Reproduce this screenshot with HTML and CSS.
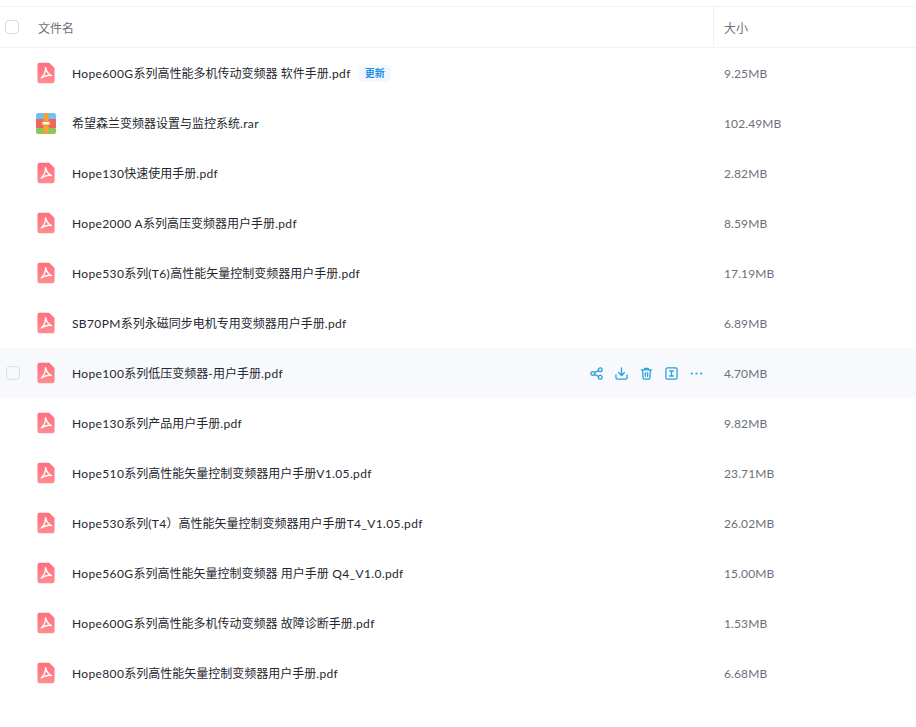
FILE: index.html
```html
<!DOCTYPE html>
<html lang="zh">
<head>
    <meta charset="UTF-8">
    <title>文件列表</title>
    <link rel="stylesheet" href="styles.css">
</head>
<body>
    <svg class="defs" width="0" height="0">
        <linearGradient id="pdf-fill" x1="0" y1="0" x2="0" y2="1">
            <stop offset="0" stop-color="#ff6f7d"/>
            <stop offset="1" stop-color="#ff8c90"/>
        </linearGradient>
        <symbol id="pdf" viewBox="0 0 20 24">
            <path d="M3 .5h10.500L19.500 6.500V21a2.500 2.500 0 0 1-2.500 2.500H3A2.500 2.500 0 0 1 .5 21V3A2.500 2.500 0 0 1 3 .5z" fill="url(#pdf-fill)"/>
            <path d="M9.500 6c.8 3.800 2.500 7 6.500 8.800-3.500-.7-7-.2-11.200 2.700M9.500 6c.3 4-1.500 8.300-4.700 11.500" fill="none" stroke="#fff" stroke-width="1.500" stroke-linecap="round" stroke-linejoin="round"/>
        </symbol>
        <symbol id="rar" viewBox="0 0 20 21">
            <rect width="20" height="7" rx="2.500" fill="#6cc3f2"/>
            <rect y="14" width="20" height="7" rx="2.500" fill="#85cb53"/>
            <rect y="6" width="20" height="9" fill="#f0645f"/>
            <rect x="7.500" width="5" height="21" fill="#f7a13c"/>
            <rect x="6" y="8.500" width="8" height="3.500" fill="#fff3dc" stroke="#e58a25" stroke-width=".8"/>
        </symbol>
    </svg>

    <div class="file-list">
        <div class="list-head">
            <div class="col-name"><span class="checkbox"></span><span class="head-label">文件名</span></div>
            <div class="col-size">大小</div>
        </div>

        <div class="row">
            <div class="col-name"><span class="check-slot"></span><svg class="icon-pdf"><use href="#pdf"/></svg><span class="fname"><span class="en">Hope600G</span>系列高性能多机传动变频器<span class="en"> </span>软件手册<span class="en">.pdf</span></span><span class="tag">更新</span></div>
            <div class="col-size">9.25MB</div>
        </div>
        <div class="row">
            <div class="col-name"><span class="check-slot"></span><svg class="icon-rar"><use href="#rar"/></svg><span class="fname">希望森兰变频器设置与监控系统<span class="en">.rar</span></span></div>
            <div class="col-size">102.49MB</div>
        </div>
        <div class="row">
            <div class="col-name"><span class="check-slot"></span><svg class="icon-pdf"><use href="#pdf"/></svg><span class="fname"><span class="en">Hope130</span>快速使用手册<span class="en">.pdf</span></span></div>
            <div class="col-size">2.82MB</div>
        </div>
        <div class="row">
            <div class="col-name"><span class="check-slot"></span><svg class="icon-pdf"><use href="#pdf"/></svg><span class="fname"><span class="en">Hope2000 A</span>系列高压变频器用户手册<span class="en">.pdf</span></span></div>
            <div class="col-size">8.59MB</div>
        </div>
        <div class="row">
            <div class="col-name"><span class="check-slot"></span><svg class="icon-pdf"><use href="#pdf"/></svg><span class="fname"><span class="en">Hope530</span>系列<span class="en">(T6)</span>高性能矢量控制变频器用户手册<span class="en">.pdf</span></span></div>
            <div class="col-size">17.19MB</div>
        </div>
        <div class="row">
            <div class="col-name"><span class="check-slot"></span><svg class="icon-pdf"><use href="#pdf"/></svg><span class="fname"><span class="en">SB70PM</span>系列永磁同步电机专用变频器用户手册<span class="en">.pdf</span></span></div>
            <div class="col-size">6.89MB</div>
        </div>

        <div class="row hovered">
            <div class="col-name">
                <span class="check-slot"><span class="checkbox"></span></span><svg class="icon-pdf"><use href="#pdf"/></svg><span class="fname"><span class="en">Hope100</span>系列低压变频器<span class="en">-</span>用户手册<span class="en">.pdf</span></span>
                <div class="actions">
                    <svg viewBox="0 0 14 14"><circle cx="3" cy="7" r="2"/><circle cx="11" cy="3" r="2"/><circle cx="11" cy="11" r="2"/><path d="M4.800 6.100l4.400-2.200M4.800 7.900l4.400 2.200"/></svg>
                    <svg viewBox="0 0 14 14"><path d="M7 1v8M3.800 6L7 9.200 10.200 6M1 8.500V11a2 2 0 0 0 2 2h8a2 2 0 0 0 2-2V8.500"/></svg>
                    <svg viewBox="0 0 14 14"><path d="M1.500 3h11M5 3V1.500h4V3M2.800 3l.5 8.500a1.500 1.500 0 0 0 1.500 1.500h4.400a1.500 1.500 0 0 0 1.500-1.500l.5-8.500M5.800 6v4M8.200 6v4"/></svg>
                    <svg viewBox="0 0 14 14"><rect x="1" y="1" width="12" height="12" rx="1.500"/><path d="M5 4.300h4M5 9.700h4M7 4.300v5.400"/></svg>
                    <svg viewBox="0 0 14 14"><circle class="dot" cx="2" cy="7" r="1.200"/><circle class="dot" cx="7" cy="7" r="1.200"/><circle class="dot" cx="12" cy="7" r="1.200"/></svg>
                </div>
            </div>
            <div class="col-size">4.70MB</div>
        </div>

        <div class="row">
            <div class="col-name"><span class="check-slot"></span><svg class="icon-pdf"><use href="#pdf"/></svg><span class="fname"><span class="en">Hope130</span>系列产品用户手册<span class="en">.pdf</span></span></div>
            <div class="col-size">9.82MB</div>
        </div>
        <div class="row">
            <div class="col-name"><span class="check-slot"></span><svg class="icon-pdf"><use href="#pdf"/></svg><span class="fname"><span class="en">Hope510</span>系列高性能矢量控制变频器用户手册<span class="en">V1.05.pdf</span></span></div>
            <div class="col-size">23.71MB</div>
        </div>
        <div class="row">
            <div class="col-name"><span class="check-slot"></span><svg class="icon-pdf"><use href="#pdf"/></svg><span class="fname"><span class="en">Hope530</span>系列<span class="en">(T4</span>）高性能矢量控制变频器用户手册<span class="en">T4_V1.05.pdf</span></span></div>
            <div class="col-size">26.02MB</div>
        </div>
        <div class="row">
            <div class="col-name"><span class="check-slot"></span><svg class="icon-pdf"><use href="#pdf"/></svg><span class="fname"><span class="en">Hope560G</span>系列高性能矢量控制变频器<span class="en"> </span>用户手册<span class="en"> Q4_V1.0.pdf</span></span></div>
            <div class="col-size">15.00MB</div>
        </div>
        <div class="row">
            <div class="col-name"><span class="check-slot"></span><svg class="icon-pdf"><use href="#pdf"/></svg><span class="fname"><span class="en">Hope600G</span>系列高性能多机传动变频器<span class="en"> </span>故障诊断手册<span class="en">.pdf</span></span></div>
            <div class="col-size">1.53MB</div>
        </div>
        <div class="row">
            <div class="col-name"><span class="check-slot"></span><svg class="icon-pdf"><use href="#pdf"/></svg><span class="fname"><span class="en">Hope800</span>系列高性能矢量控制变频器用户手册<span class="en">.pdf</span></span></div>
            <div class="col-size">6.68MB</div>
        </div>
    </div>
</body>
</html>
```

FILE: styles.css
```css
body {
    margin: 0;
    background-color: #fff;
    font-family: Lato, "Noto Sans CJK SC", sans-serif;
    font-size: 12px;
    color: #25272f;
    overflow: hidden;
}

.defs {
    position: absolute;
}

.file-list {
    padding-top: 6px;
}

.list-head {
    display: flex;
    height: 40px;
    align-items: stretch;
    border-top: 1px solid #f1f2f4;
    border-bottom: 1px solid #f1f2f4;
    color: #6b6f7a;
}

.list-head .col-name {
    border-right: 1px solid #f1f2f4;
}

.list-head .col-size {
    width: 202px;
    padding-left: 10px;
    letter-spacing: 0;
}

.col-name {
    display: flex;
    align-items: center;
    width: 713px;
    flex-shrink: 0;
}

.col-size {
    display: flex;
    align-items: center;
    padding-left: 11px;
    color: #6b6f7a;
    letter-spacing: 0.12px;
}

.checkbox {
    display: block;
    width: 12px;
    height: 12px;
    margin-left: 5px;
    border: 1px solid #dcdee3;
    border-radius: 4px;
}

.row .checkbox {
    margin-left: 6px;
}

.head-label {
    margin-left: 19px;
}

.row {
    display: flex;
    height: 50px;
}

.row.hovered {
    background-color: #f7f9fc;
}

.check-slot {
    width: 36px;
    flex-shrink: 0;
}

.icon-pdf {
    width: 18px;
    height: 22px;
    margin-left: 1px;
    margin-right: 17px;
    flex-shrink: 0;
}

.icon-rar {
    width: 20px;
    height: 21px;
    margin-right: 16px;
    flex-shrink: 0;
}

.fname {
    margin-top: -2px;
    white-space: nowrap;
}

.en {
    letter-spacing: 0.36px;
    white-space: pre;
}

.tag {
    margin-left: 8px;
    padding: 1px 6px;
    height: 15px;
    line-height: 15px;
    border-radius: 4px;
    background-color: #f4f8fd;
    color: #1c8fe8;
    font-size: 10px;
    font-weight: 700;
}

.actions {
    display: flex;
    gap: 12px;
    margin-left: auto;
    margin-right: 10px;
}

.actions svg {
    width: 13px;
    height: 13px;
    fill: none;
    stroke: #2a9fe0;
    stroke-width: 1.400;
    stroke-linecap: round;
    stroke-linejoin: round;
}

.actions .dot {
    fill: #2a9fe0;
    stroke: none;
}
```
